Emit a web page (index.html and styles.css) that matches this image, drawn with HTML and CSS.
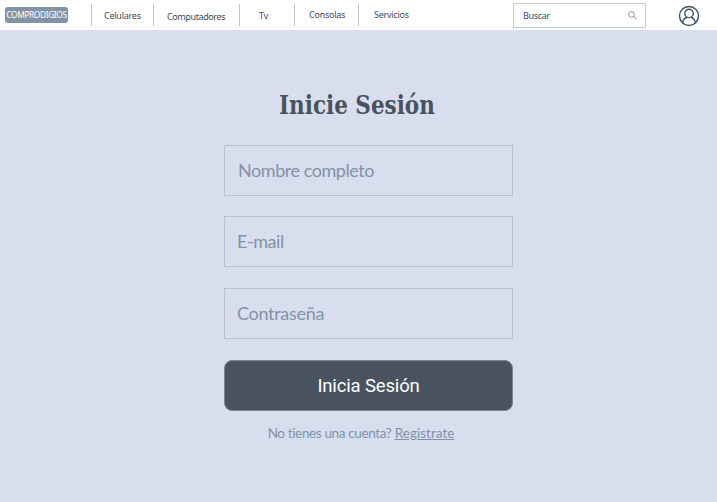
FILE: index.html
```html
<!DOCTYPE html>
<html lang="es">
<head>
<meta charset="utf-8">
<title>Comprodigios</title>
<link rel="stylesheet" href="styles.css">
</head>
<body>
<header class="topbar">
  <a class="brand">COMPRODIGIOS</a>
  <nav class="menu">
    <a class="item celulares"><span>Celulares</span></a>
    <a class="item computadores"><span>Computadores</span></a>
    <a class="item tv"><span>Tv</span></a>
    <a class="item consolas"><span>Consolas</span></a>
    <a class="item servicios"><span>Servicios</span></a>
  </nav>
  <div class="search">
    <span>Buscar</span>
    <svg width="9" height="9" viewBox="0 0 9 9" fill="none" stroke="#7c828d" stroke-width="0.9"><circle cx="3.5" cy="3.5" r="2.8"/><path d="M5.6 5.6 8.4 8.2"/></svg>
  </div>
  <svg class="avatar" width="22" height="22" viewBox="0 0 22 22" fill="none" stroke="#3c526b" stroke-width="1.4"><circle cx="11" cy="11" r="9.5"/><circle cx="11" cy="8.4" r="4.2"/><path d="M4.6 17.8c.5-3.2 2.4-5 4.6-5.6M17.4 17.8c-.5-3.2-2.4-5-4.6-5.6"/></svg>
</header>
<main class="login">
  <h1><span>Inicie Sesión</span></h1>
  <form class="form">
    <div class="field name"><span>Nombre completo</span></div>
    <div class="field email"><span>E-mail</span></div>
    <div class="field password"><span>Contraseña</span></div>
    <button type="button" class="submit"><span>Inicia Sesión</span></button>
  </form>
  <p class="signup"><span class="question">No tienes una cuenta?</span> <a>Registrate</a></p>
</main>
</body>
</html>
```
FILE: styles.css
```css
* { box-sizing: border-box; }
body {
  margin: 0;
  height: 502px;
  overflow: hidden;
  background: #d8deee;
  font-family: Lato, sans-serif;
  font-variant-ligatures: none;
}
.topbar {
  display: flex;
  align-items: flex-start;
  height: 30px;
  background: #fff;
  color: #414b59;
}
.brand {
  width: 63px;
  height: 16px;
  margin: 7px 0 0 5px;
  border-radius: 3px;
  background: #8492a6;
  color: #fff;
  font: 8.3px/16px "Noto Sans", sans-serif;
  letter-spacing: -0.35px;
  text-align: center;
  white-space: nowrap;
}
.menu {
  display: grid;
  grid-template-columns: 62px 86px 55px 64px 132px;
  margin: 4px 0 0 23px;
}
.item {
  height: 22px;
  border-left: 1px solid #c6c6c8;
  font: 9px/22px "Noto Sans", sans-serif;
  white-space: nowrap;
}
.celulares { padding-left: 12px; line-height: 23px; letter-spacing: -0.25px; }
.computadores { padding-left: 13px; line-height: 25px; letter-spacing: -0.4px; }
.tv { padding-left: 19px; line-height: 23px; }
.consolas { padding-left: 14px; line-height: 21px; letter-spacing: -0.25px; }
.servicios { padding-left: 15px; line-height: 21px; letter-spacing: -0.25px; }
.search {
  display: flex;
  justify-content: space-between;
  align-items: center;
  width: 133px;
  height: 25px;
  margin: 3px 0 0 23px;
  padding: 0 8px 0 9px;
  border: 1px solid #cacbd3;
  font: 9px/23px "Noto Sans", sans-serif;
  letter-spacing: -0.3px;
}
.avatar { margin: 5px 0 0 32px; }
.login {
  display: flex;
  flex-direction: column;
  align-items: center;
}
h1 {
  width: 156px;
  height: 40px;
  margin: 55px 4px 0 0;
  color: #48535f;
  font: bold 26px/40px "DejaVu Serif Condensed", "DejaVu Serif", serif;
  white-space: nowrap;
}
h1 span {
  display: inline-block;
  transform: scaleX(0.92);
  transform-origin: left;
}
.form {
  display: flex;
  flex-direction: column;
  width: 289px;
  margin: 20px 0 0 20px;
}
.field {
  height: 51px;
  padding-left: 13px;
  border: 1px solid #b9c0d2;
  color: #8292a8;
  font-size: 18px;
  line-height: 49px;
  letter-spacing: -0.45px;
}
.email { margin-top: 20px; padding-left: 12px; }
.password { margin-top: 21px; padding-left: 12px; letter-spacing: -0.3px; }
.submit {
  height: 51px;
  margin-top: 21px;
  padding: 2px 0 0;
  border: 1px solid #7c8796;
  border-radius: 8px;
  background: #48535f;
  color: #fff;
  font: 18.5px/47px Roboto, sans-serif;
  letter-spacing: -0.15px;
}
.signup {
  margin: 11px 0 0 5px;
  color: #8292a8;
  font-size: 13.5px;
  line-height: 22px;
  letter-spacing: -0.25px;
  white-space: nowrap;
}
.question { letter-spacing: -0.36px; }
.signup a { text-decoration: underline; letter-spacing: 0.02px; }
```
